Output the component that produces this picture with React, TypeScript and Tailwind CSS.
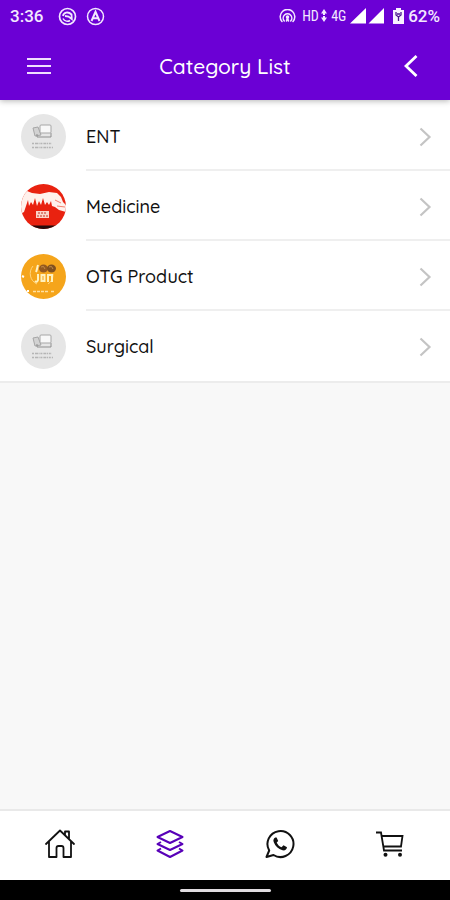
import React from 'react';

function StatusBar() {
  return (
    <div className="flex h-8 items-center justify-between px-[10px] font-['Roboto',sans-serif] text-[17px] font-medium leading-5 text-[#f3e8ff]">
      <div className="flex items-center gap-[9px]">
        <span className="mr-[6px]">3:36</span>
        <svg width="19" height="19" viewBox="0 0 19 19" fill="none" stroke="currentColor" aria-hidden="true">
          <circle cx="9.5" cy="9.5" r="8" strokeWidth="1.7" />
          <path d="M5 9C5.500 5.500 10 4 13.500 7.500L13.800 12 10.500 9.500 7 9" strokeWidth="1.8" />
          <path d="M5 11.500C6.500 14.500 10 14.800 12 13.500" strokeWidth="1.5" />
        </svg>
        <svg width="19" height="19" viewBox="0 0 19 19" fill="none" stroke="currentColor" aria-hidden="true">
          <circle cx="9.5" cy="9.5" r="8" strokeWidth="1.5" />
          <path d="M5.500 14 9.500 4.800 13.500 14M7 11.300h5" strokeWidth="2" />
        </svg>
      </div>
      <div className="flex items-center">
        <svg className="mr-[6px]" width="17" height="15" viewBox="0 0 17 15" fill="none" stroke="currentColor" strokeWidth="1.5" strokeLinecap="round" aria-hidden="true">
          <path d="M3 12.500A7.300 7.300 0 1 1 14 12.500M5.300 12A4.300 4.300 0 1 1 11.700 12" />
          <path d="M8.500 8.500 7.500 12M8.500 8.500l1 3.500" />
          <circle cx="8.500" cy="8" r="1" fill="currentColor" />
        </svg>
        <span className="w-4 font-['Roboto_Condensed','Liberation_Sans_Narrow','Roboto',sans-serif] text-[14px] font-normal">HD</span>
        <svg className="ml-[3px]" width="6" height="14" viewBox="0 0 6 14" fill="currentColor" aria-hidden="true">
          <path d="M3 0 6 4.500H4V6H2V4.500H0ZM3 13 0 8.500h2V7h2v1.500h2Z" />
        </svg>
        <span className="ml-1 w-[19px] font-['Roboto_Condensed','Liberation_Sans_Narrow','Roboto',sans-serif] text-[14px] font-normal">4G</span>
        <svg width="35" height="16" viewBox="0 0 35 16" fill="#fff" aria-hidden="true">
          <path d="M0 15.500 16 0v15.500ZM18.500 15.500 34 0v15.500Z" />
        </svg>
        <svg className="ml-2" width="11" height="16" viewBox="0 0 11 16" aria-hidden="true">
          <path d="M0 2h3V0h5v2h3v14H0Z" fill="#f8f0ff" />
          <path d="M3 4v3l2.500 2L8 7V4M5.500 9v4M4 6h3" fill="none" stroke="#4b168e" strokeWidth="1.300" />
        </svg>
        <span className="ml-1">62%</span>
      </div>
    </div>
  );
}

function PlaceholderPicture() {
  return (
    <svg width="45" height="45" viewBox="0 0 45 45" aria-hidden="true">
      <circle cx="22.500" cy="22.500" r="22.500" fill="#e6e6e6" />
      <g fill="none" stroke="#a6a6a6" strokeWidth="1">
        <path d="m12 14 5-1 3 8-6 1Z" fill="#d2d2d2" />
        <path d="M16 20v3h14v-4" stroke="#8f8f8f" />
        <rect x="19" y="11" width="11" height="8" rx="1" fill="#f8f8f8" />
      </g>
      <path d="M11 29.500h20M11 33.500h21" stroke="#b5b5b5" strokeWidth="1.500" strokeDasharray="2 1 3 .6 1 .8" />
    </svg>
  );
}

function MedicinePicture() {
  return (
    <svg width="45" height="45" viewBox="0 0 45 45" aria-hidden="true">
      <defs>
        <clipPath id="medicine-clip"><circle cx="22.500" cy="22.500" r="22.500" /></clipPath>
      </defs>
      <g clipPath="url(#medicine-clip)">
        <path d="M0 0h45v45H0Z" fill="#e92210" />
        <path d="M0 10 6 7l5 2 8 1 9-2 8 1 4 4 2 5 3 3v7l-7-2-4-3-3-1-1-5-2 4-2-3-2 3-2-7-2 7-2-4-2 5-2-8-2 7-2-3-2 4-1-6-2 6-2 6-4 2-3-2Z" fill="#fff1ec" />
        <path d="m34 16 6 3M36 22l8 1" stroke="#f2806f" strokeWidth="1" />
        <path d="M15 27h13v7H15Z" fill="#fbd3ca" />
        <path d="M17 29h9M16 32h11" stroke="#c43423" strokeWidth="1.200" strokeDasharray="2 1" />
        <path d="M0 41.500h45V45H0Z" fill="#250b0b" />
      </g>
    </svg>
  );
}

function OtgPicture() {
  return (
    <svg width="45" height="45" viewBox="0 0 45 45" aria-hidden="true">
      <circle cx="22.500" cy="22.500" r="22.500" fill="#f5a51b" />
      <path d="M12 12C7 18 9 27 16 30M32 20c0 5-2 8-5 10" fill="none" stroke="#ffd47e" />
      <path d="M17 11c-1 3-1 5-2 7" stroke="#fff2c8" strokeWidth="2" />
      <ellipse cx="22.500" cy="14.500" rx="4.500" ry="4" fill="#94591f" />
      <ellipse cx="30.500" cy="14.500" rx="4.500" ry="4" fill="#80501f" />
      <path d="M20 13q3-2 4 2M28 13q3-2 4 2" fill="none" stroke="#c18c49" />
      <path d="M17 20v6q-1 3-3 1M20.500 21h3v6h-3ZM27 28v-7h4v7" fill="none" stroke="#fff1bd" strokeWidth="2" />
      <path d="M12 37.500h16M30 37.500h4" stroke="#ffe0a0" strokeWidth="1.500" strokeDasharray="3 1" />
      <path d="m1 22 2 1M6 37h2" stroke="#fff" strokeWidth="2" />
    </svg>
  );
}

const categories = [
  { name: 'ENT', Picture: PlaceholderPicture },
  { name: 'Medicine', Picture: MedicinePicture },
  { name: 'OTG Product', Picture: OtgPicture },
  { name: 'Surgical', Picture: PlaceholderPicture },
];

function CategoryRow({ name, Picture, last }: { name: string; Picture: () => React.ReactElement; last: boolean }) {
  return (
    <li>
      <a href="#" className="flex h-[70px] items-stretch pl-[21px]">
        <span className="flex w-[65px] items-center"><Picture /></span>
        <span className={last ? 'flex flex-1 items-center justify-between pr-[18px] pt-[2px]' : 'flex flex-1 items-center justify-between border-b-2 border-[#efefef] pr-[18px] pt-1'}>
          <span className="text-[18px] font-medium leading-6">{name}</span>
          <svg width="13" height="20" viewBox="0 0 13 20" fill="none" stroke="#c4c4c4" strokeWidth="2.200" aria-hidden="true">
            <path d="m1.500 1.500 9 8.500-9 8.500" />
          </svg>
        </span>
      </a>
    </li>
  );
}

function BottomNav() {
  return (
    <nav className="grid h-[71px] grid-cols-4 border-t-2 border-[#e9e9e9] bg-white px-[5px] pb-[3px] text-[#111]" aria-label="Main">
      <a href="#" aria-label="Home" className="flex items-center justify-center">
        <svg width="30" height="30" viewBox="0 0 30 30" fill="none" stroke="currentColor" strokeWidth="1.800" strokeLinejoin="round" strokeLinecap="round">
          <path d="M1 15 15 1.500 29 15M4 12.500V28h7.500V19q0-2 2-2h3q2 0 2 2v9H26V12.500M20 6V2.500h4V10" />
        </svg>
      </a>
      <a href="#" aria-label="Categories" aria-current="page" className="flex items-center justify-center text-[#5800b8]">
        <svg width="28" height="30" viewBox="0 0 28 30" fill="none" stroke="currentColor" strokeWidth="2" strokeLinejoin="round">
          <path d="M14 2 26.500 8 14 14 1.500 8ZM5 13 1.500 15 14 21 26.500 15 23 13M5 19.500 1.500 21.500 14 28 26.500 21.500 23 19.500" />
        </svg>
      </a>
      <a href="#" aria-label="WhatsApp" className="flex items-center justify-center">
        <svg width="30" height="30" viewBox="0 0 30 30" fill="none" stroke="currentColor" strokeWidth="2">
          <path d="M4.200 21.500A13 13 0 1 1 8.500 26L1.500 28Z" strokeLinejoin="round" />
          <path d="M10.200 8.500c-1.500 1-2.300 2.500-1.500 4.500 1.600 4.200 4.600 7 8.800 8.300 2.200.6 4.300-.6 4.500-3l-3.500-2-2 2c-2.300-1-3.800-2.500-4.800-4.800l1.500-1.500-1.600-3.500Z" fill="currentColor" stroke="none" />
        </svg>
      </a>
      <a href="#" aria-label="Cart" className="flex items-center justify-center">
        <svg width="28" height="28" viewBox="0 0 28 28" fill="none" stroke="currentColor" strokeWidth="1.800">
          <path d="M0 2.500h5L8 20.500h18M6 6h20.500L25 16.500H7.500" />
          <circle cx="9.500" cy="24.800" r="2" fill="currentColor" stroke="none" />
          <circle cx="24" cy="24.800" r="2" fill="currentColor" stroke="none" />
        </svg>
      </a>
    </nav>
  );
}

export default function App() {
  return (
    <div className="flex min-h-screen flex-col bg-[#f8f8f8] font-['Quicksand','Lato',sans-serif] text-[#111]">
      <header className="relative h-[100px] bg-[#6b00d5] text-white shadow-[0_1px_6px_rgba(0,0,0,0.3)]">
        <StatusBar />
        <div className="flex h-[68px] items-center justify-between px-[27px]">
          <button type="button" aria-label="Open menu" className="flex w-6 justify-center">
            <svg width="24" height="16" viewBox="0 0 24 16" stroke="#f0ddff" strokeWidth="2" aria-hidden="true">
              <path d="M0 1h24M0 8h24M0 15h24" />
            </svg>
          </button>
          <h1 className="text-[21px] font-medium leading-7">Category List</h1>
          <button type="button" aria-label="Go back" className="flex w-6 justify-center">
            <svg width="14" height="22" viewBox="0 0 14 22" fill="none" stroke="currentColor" strokeWidth="2.800" aria-hidden="true">
              <path d="M12.500 1 2 11l10.500 10" />
            </svg>
          </button>
        </div>
      </header>
      <main className="flex-1">
        <ul className="border-b-2 border-[#ececec] bg-white pt-px">
          {categories.map((c, i) => (
            <CategoryRow key={c.name} name={c.name} Picture={c.Picture} last={i === categories.length - 1} />
          ))}
        </ul>
      </main>
      <BottomNav />
      <div className="flex h-5 items-center justify-center bg-black">
        <div className="h-[3px] w-[91px] rounded-full bg-[#e0dce0]" />
      </div>
    </div>
  );
}
